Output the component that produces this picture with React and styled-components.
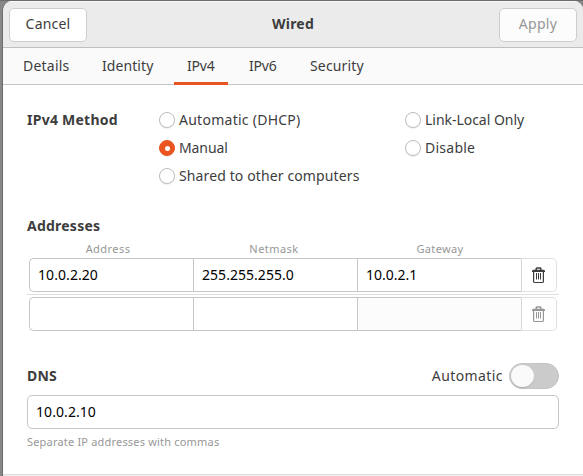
import React from 'react';
import styled, { createGlobalStyle } from 'styled-components';

const GlobalStyle = createGlobalStyle`
  * { box-sizing: border-box; }
  body {
    margin: 0;
    overflow: hidden;
    background: #878787;
    font: 14px/20px "Noto Sans", "Open Sans", sans-serif;
    color: #3d3d3d;
  }
`;

const Desktop = styled.div`
  width: 583px;
  height: 476px;
  padding: 1px 0 0 2px;
  background: linear-gradient(#6e6a6c 0 1px, #878787 1px);
`;

const Dialog = styled.main`
  height: 475px;
  display: flex;
  flex-direction: column;
  background: #fff;
  border-left: 1px solid #6c6c6c;
  border-radius: 10px 9px 0 0;
  overflow: hidden;
`;

const HeaderBar = styled.header`
  height: 47px;
  flex: none;
  display: flex;
  align-items: center;
  justify-content: space-between;
  padding: 0 6px;
  background: #ebebeb;
  border-bottom: 1px solid #bfbfbf;
  box-shadow: inset 0 1px #fafafa;
`;

const Text = styled.span`
  letter-spacing: ${(p) => p.$track ?? 0}px;
  white-space: nowrap;
`;

const Strong = styled(Text)`
  font-weight: 700;
`;

const Button = styled.button`
  width: 78px;
  height: 34px;
  margin-top: 1px;
  padding: 0 0 1px;
  border: 1px solid #cdcdcd;
  border-radius: 5px;
  background: ${(p) => (p.disabled ? '#fcfcfc' : '#fff')};
  color: ${(p) => (p.disabled ? '#979797' : '#3d3d3d')};
  font: inherit;
`;

const Tabs = styled.nav`
  height: 37px;
  flex: none;
  display: flex;
  padding-left: 7px;
  background: #fafafa;
  border-bottom: 1px solid #c6c6c6;
`;

const Tab = styled.div`
  width: ${(p) => p.$width}px;
  height: 37px;
  padding: 8px 0 0 ${(p) => p.$inset ?? 13}px;
  border-bottom: 3px solid ${(p) => (p.$active ? '#e95420' : 'transparent')};
`;

const Page = styled.section`
  flex: 1;
  display: flex;
  flex-direction: column;
  padding: 21px 24px 0;
`;

const MethodGrid = styled.div`
  display: grid;
  grid-template-columns: 132px 246px 1fr;
  grid-auto-rows: 28px;
  align-items: center;
`;

const Option = styled.label`
  grid-column: ${(p) => p.$column};
  display: flex;
  align-items: center;
  gap: 4px;
`;

const Radio = styled.span`
  width: 16px;
  height: 16px;
  flex: none;
  display: grid;
  place-items: center;
  border: 1px solid ${(p) => (p.$checked ? '#e95420' : '#bdbdbd')};
  border-radius: 50%;
  background: ${(p) => (p.$checked ? '#e95420' : '#fff')};
  box-shadow: 0 1px 1px #00000010;

  &::after {
    content: '';
    width: 5px;
    height: 5px;
    border-radius: 50%;
    background: #fff;
  }
`;

const SectionTitle = styled.h2`
  height: 20px;
  margin: 26px 0 0;
  font: inherit;
  display: flex;
`;

const ColumnHeads = styled.div`
  display: grid;
  grid-template-columns: repeat(3, 166px);
  height: 22px;
  padding-top: 4px;
  margin-left: -2px;
  font-size: 11px;
  line-height: 18px;
  color: #979797;
  text-align: center;
`;

const AddressList = styled.div`
  display: flex;
  flex-direction: column;
`;

const AddressRow = styled.div`
  height: 34px;
  margin: 0 2px;
  display: grid;
  grid-template-columns: 164px 164px 164px 36px;
`;

const Separator = styled.div`
  height: 1px;
  margin: 2px 0;
  background: #dfdfdf;
`;

const Entry = styled.div`
  height: 34px;
  display: flex;
  align-items: center;
  padding: 0 8px 1px;
  border: 1px solid #c6c6c6;
  border-radius: 5px;
  background: #fff;
  color: #000;
`;

const CellEntry = styled(Entry)`
  border-right: 0;
  border-radius: ${(p) => (p.$first ? '5px 0 0 5px' : '0')};
  background: ${(p) => (p.$disabled ? '#fcfcfc' : '#fff')};
`;

const DeleteButton = styled.button`
  padding: 0 1px 0 0;
  display: grid;
  place-items: center;
  border: 1px solid #e0e0e0;
  border-left-color: #d6d6d6;
  border-radius: 0 5px 5px 0;
  background: #fff;
  color: ${(p) => (p.disabled ? '#979797' : '#3d3d3d')};
`;

const DnsHeader = styled.div`
  display: flex;
  align-items: center;
  height: 26px;
  margin-top: 32px;
`;

const AutoLabel = styled.span`
  margin-left: auto;
  margin-right: 6px;
`;

const Switch = styled.span`
  width: 50px;
  height: 26px;
  padding: 1px;
  border: 1px solid #c4c4c4;
  border-radius: 13px;
  background: #cbcbcb;

  &::after {
    content: '';
    display: block;
    width: 23px;
    height: 22px;
    border-radius: 50%;
    background: #fafafa;
    box-shadow: 0 1px 1px #00000020;
  }
`;

const DnsEntry = styled(Entry)`
  margin-top: 6px;
`;

const Hint = styled.div`
  margin-top: 4px;
  font-size: 11px;
  line-height: 18px;
  color: #979797;
`;

const BottomEdge = styled.div`
  height: 2px;
  margin: auto -24px 0;
  background: #dedede;
  border-bottom: 1px solid #f0f0f0;
`;

const TrashIcon = () => (
  <svg width="13" height="17" viewBox="0 0 13 17" fill="none" stroke="currentColor">
    <path d="M4.2 3V1.7q0-.7.7-.7h3.2q.7 0 .7.7V3" strokeWidth="1.5" />
    <path d="M0 5V4q.3-1.3 1.6-1.3h9.8Q12.7 2.700 13 4v1z" fill="currentColor" stroke="none" />
    <path d="M1.600 5v9.400q0 1.100 1.100 1.100h7.600q1.100 0 1.100-1.100V5" strokeWidth="1.200" />
    <path d="M4.500 6v6.500M6.500 6v6.500M8.500 6v6.500" />
  </svg>
);

const tabs = [
  { label: 'Details', width: 78, track: 0.22 },
  { label: 'Identity', width: 86, track: 0.08, inset: 14 },
  { label: 'IPv4', width: 54, track: -0.2, active: true },
  { label: 'IPv6', width: 70, track: -0.2, inset: 21 },
  { label: 'Security', width: 80, track: 0.15, inset: 12 },
];

const methods = [
  { label: 'Automatic (DHCP)', column: 2, track: 0.26 },
  { label: 'Link-Local Only', column: 3, track: -0.03 },
  { label: 'Manual', column: 2, track: -0.1 },
  { label: 'Disable', column: 3, track: 0.25 },
  { label: 'Shared to other computers', column: 2, track: 0.12 },
].map((m) => ({ ...m, checked: m.label === 'Manual' }));

export default function App() {
  return (
    <>
      <GlobalStyle />
      <Desktop>
        <Dialog>
          <HeaderBar>
            <Button><Text $track={0.2}>Cancel</Text></Button>
            <Strong $track={0.2}>Wired</Strong>
            <Button disabled><Text $track={0.35}>Apply</Text></Button>
          </HeaderBar>
          <Tabs>
            {tabs.map((t) => (
              <Tab key={t.label} $width={t.width} $inset={t.inset} $active={t.active}>
                <Text $track={t.track}>{t.label}</Text>
              </Tab>
            ))}
          </Tabs>
          <Page>
            <MethodGrid>
              <Strong $track={0.25}>IPv4 Method</Strong>
              {methods.map((m) => (
                <Option key={m.label} $column={m.column}>
                  <Radio $checked={m.checked} />
                  <Text $track={m.track}>{m.label}</Text>
                </Option>
              ))}
            </MethodGrid>
            <SectionTitle><Strong $track={0.23}>Addresses</Strong></SectionTitle>
            <ColumnHeads>
              <Text $track={0.44}>Address</Text>
              <Text $track={0.46}>Netmask</Text>
              <Text $track={0.36}>Gateway</Text>
            </ColumnHeads>
            <AddressList>
              <AddressRow>
                <CellEntry $first><Text $track={0.07}>10.0.2.20</Text></CellEntry>
                <CellEntry><Text $track={0.04}>255.255.255.0</Text></CellEntry>
                <CellEntry><Text>10.0.2.1</Text></CellEntry>
                <DeleteButton aria-label="Delete address"><TrashIcon /></DeleteButton>
              </AddressRow>
              <Separator />
              <AddressRow>
                <CellEntry $first />
                <CellEntry />
                <CellEntry $disabled />
                <DeleteButton aria-label="Delete address" disabled><TrashIcon /></DeleteButton>
              </AddressRow>
            </AddressList>
            <DnsHeader>
              <Strong $track={0.2}>DNS</Strong>
              <AutoLabel><Text $track={0.41}>Automatic</Text></AutoLabel>
              <Switch role="switch" aria-checked="false" />
            </DnsHeader>
            <DnsEntry><Text $track={0.07}>10.0.2.10</Text></DnsEntry>
            <Hint><Text $track={0.19}>Separate IP addresses with commas</Text></Hint>
            <BottomEdge />
          </Page>
        </Dialog>
      </Desktop>
    </>
  );
}
